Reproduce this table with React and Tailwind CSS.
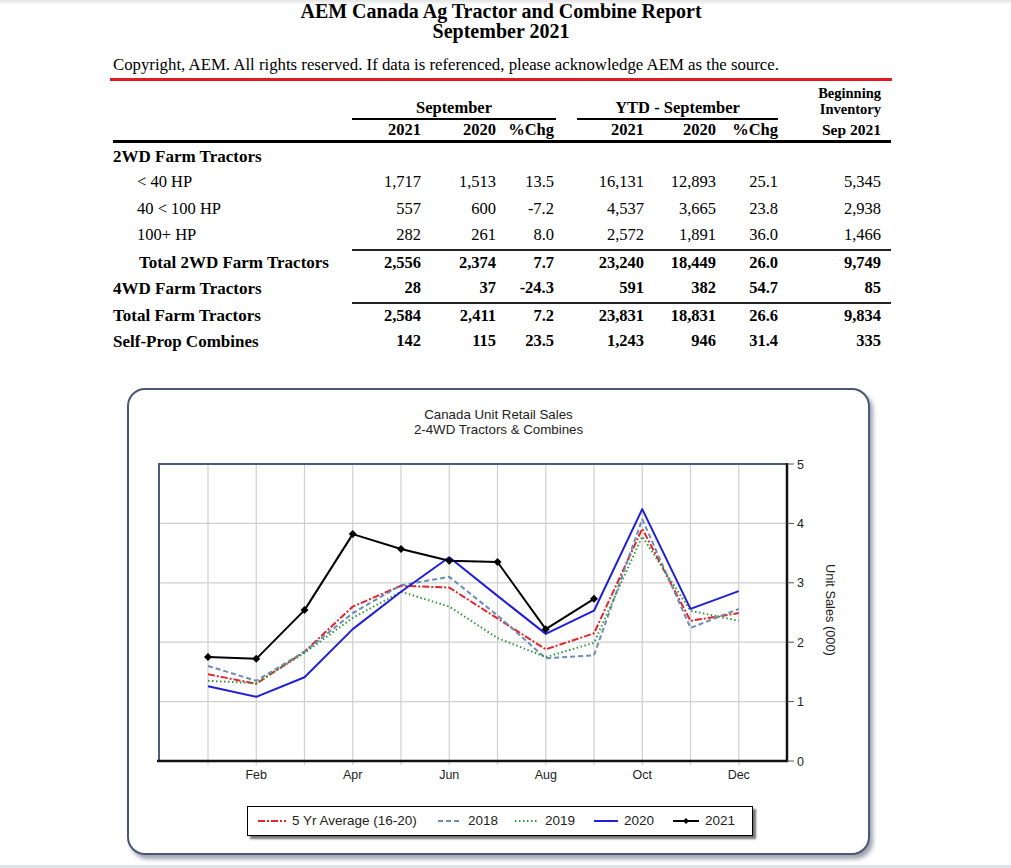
import React from 'react';

const COLS = 'grid grid-cols-[239px_69px_75px_58px_90px_72px_62px_103px_10px]';

const rows = [
  { label: '2WD Farm Tractors', bold: true, indent: 0, vals: null },
  { label: '< 40 HP', indent: 24, vals: ['1,717', '1,513', '13.5', '16,131', '12,893', '25.1', '5,345'] },
  { label: '40 < 100 HP', indent: 24, vals: ['557', '600', '-7.2', '4,537', '3,665', '23.8', '2,938'] },
  { label: '100+ HP', indent: 24, vals: ['282', '261', '8.0', '2,572', '1,891', '36.0', '1,466'] },
  { label: 'Total 2WD Farm Tractors', bold: true, indent: 26, line: true, vals: ['2,556', '2,374', '7.7', '23,240', '18,449', '26.0', '9,749'] },
  { label: '4WD Farm Tractors', bold: true, indent: 0, vals: ['28', '37', '-24.3', '591', '382', '54.7', '85'] },
  { label: 'Total Farm Tractors', bold: true, indent: 0, line: true, vals: ['2,584', '2,411', '7.2', '23,831', '18,831', '26.6', '9,834'] },
  { label: 'Self-Prop Combines', bold: true, indent: 0, vals: ['142', '115', '23.5', '1,243', '946', '31.4', '335'] },
];

// chart data, thousands of units, Jan..Dec
const series = [
  { name: '5 Yr Average (16-20)', color: '#e3242b', dash: '7 2 2 2', w: 30, data: [1.46, 1.3, 1.84, 2.6, 2.95, 2.92, 2.4, 1.88, 2.15, 3.91, 2.36, 2.49] },
  { name: '2018', color: '#6b8db3', dash: '5 3', w: 26, data: [1.6, 1.35, 1.84, 2.49, 2.96, 3.1, 2.45, 1.73, 1.78, 4.07, 2.24, 2.56] },
  { name: '2019', color: '#2f9a3c', dash: '1.5 2.5', w: 26, data: [1.35, 1.31, 1.82, 2.41, 2.85, 2.6, 2.07, 1.75, 1.99, 3.78, 2.53, 2.36] },
  { name: '2020', color: '#1f1fd8', dash: null, w: 26, data: [1.26, 1.08, 1.41, 2.22, 2.85, 3.43, 2.78, 2.14, 2.53, 4.24, 2.56, 2.86] },
  { name: '2021', color: '#000000', dash: null, w: 28, marker: true, data: [1.75, 1.72, 2.54, 3.82, 3.57, 3.37, 3.35, 2.22, 2.73] },
];

const mx = (i) => 208 + 48.25 * i;
const my = (v) => 761 - 59.4 * v;
const months = ['Jan', 'Feb', 'Mar', 'Apr', 'May', 'Jun', 'Jul', 'Aug', 'Sep', 'Oct', 'Nov', 'Dec'];
const SANS = "'Liberation Sans', Arial, sans-serif";

const Diamond = ({ x, y }) => (
  <polygon points={`${x},${y - 4} ${x + 4},${y} ${x},${y + 4} ${x - 4},${y}`} fill="#000" />
);

const Plot = () => (
  <svg width="739" height="335" viewBox="129 455 739 335" className="block">
    {/* grid */}
    {months.map((m, i) => (
      <line key={m} x1={mx(i)} y1={464} x2={mx(i)} y2={765} stroke="#cfcfcf" strokeWidth="1.2" />
    ))}
    {[1, 2, 3, 4].map((v) => (
      <line key={v} x1={159} y1={my(v)} x2={787} y2={my(v)} stroke="#cfcfcf" strokeWidth="1.2" />
    ))}
    {/* frame */}
    <line x1={159} y1={464} x2={787} y2={464} stroke="#4d5c7c" strokeWidth="2" />
    <line x1={159} y1={463} x2={159} y2={761} stroke="#4d5c7c" strokeWidth="2" />
    <line x1={157} y1={761} x2={788} y2={761} stroke="#111" strokeWidth="2.5" />
    <line x1={787} y1={463} x2={787} y2={762} stroke="#111" strokeWidth="2.5" />
    {[0, 1, 2, 3, 4, 5].map((v) => (
      <g key={v}>
        <line x1={787} y1={my(v)} x2={794} y2={my(v)} stroke="#555" strokeWidth="1" />
        <text x={797} y={my(v) + 4.5} fontSize="12.5" fill="#222" fontFamily={SANS}>{v}</text>
      </g>
    ))}
    {months.map((m, i) =>
      i % 2 === 1 ? (
        <text key={m} x={mx(i)} y={779} fontSize="12.5" textAnchor="middle" fill="#222" fontFamily={SANS}>{m}</text>
      ) : null
    )}
    <text x={826} y={610} fontSize="12.8" textAnchor="middle" fill="#222" transform="rotate(90 826 610)" fontFamily={SANS}>Unit Sales (000)</text>
    {/* lines */}
    {series.map((s) => (
      <g key={s.name}>
        <polyline
          points={s.data.map((v, i) => `${mx(i)},${my(v)}`).join(' ')}
          fill="none"
          stroke={s.color}
          strokeWidth="2"
          strokeDasharray={s.dash || undefined}
          strokeLinejoin="round"
        />
        {s.marker && s.data.map((v, i) => <Diamond key={i} x={mx(i)} y={my(v)} />)}
      </g>
    ))}
  </svg>
);

const Sample = ({ s }) => (
  <svg width={s.w} height="8" className="shrink-0">
    <line x1="1" y1="4" x2={s.w - 1} y2="4" stroke={s.color} strokeWidth="2" strokeDasharray={s.dash || undefined} />
    {s.marker && <polygon points={`${s.w / 2},1 ${s.w / 2 + 3},4 ${s.w / 2},7 ${s.w / 2 - 3},4`} fill="#000" />}
  </svg>
);

const Legend = () => {
  const widths = ['w-[180px]', 'w-[77px]', 'w-[79px]', 'w-[79px]', 'w-[72px]'];
  return (
    <div className="ml-[118px] w-[506px] h-[30px] border border-black bg-white shadow-[3px_3px_2px_rgba(0,0,0,0.55)] flex items-center pl-[9px] font-['Liberation_Sans',Arial,sans-serif] text-[13.5px] text-[#222]">
      {series.map((s, i) => (
        <div key={s.name} className={`${widths[i]} flex items-center gap-[5px]`}>
          <Sample s={s} />
          <span>{s.name}</span>
        </div>
      ))}
    </div>
  );
};

export default function App() {
  return (
    <div className="relative w-[1011px] h-[868px] overflow-hidden bg-white font-['Liberation_Serif','Times_New_Roman',serif] text-black">
      <div className="w-[1002px] pt-[1px] text-center font-bold text-[20px]">
        <div className="leading-[20px]">AEM Canada Ag Tractor and Combine Report</div>
        <div className="leading-[21px]">September 2021</div>
      </div>
      <div className="absolute top-0 left-0 w-full h-[5px] bg-linear-to-b from-[#e4e4e4] to-white/0 pointer-events-none" />

      <div className="ml-[113px] mt-[13px] text-[16.8px] leading-[20px]">
        Copyright, AEM. All rights reserved. If data is referenced, please acknowledge AEM as the source.
      </div>
      <div className="ml-[110px] mt-[3px] w-[782px] h-[3px] bg-[#e21b23]" />

      {/* table */}
      <div className="ml-[113px] mt-[4px] w-[778px]">
        <div className={`${COLS} h-[35px] items-end font-bold`}>
          <div />
          <div className="col-span-3 text-center text-[16.5px] border-b-2 border-black leading-[16px] pb-[2px] mr-[-2px]">September</div>
          <div className="col-span-3 text-center text-[16.5px] border-b-2 border-black leading-[16px] pb-[2px] ml-[23px]">YTD - September</div>
          <div className="self-start text-right text-[14.5px] leading-[16px]">
            <div>Beginning</div>
            <div>Inventory</div>
          </div>
          <div />
        </div>
        <div className={`${COLS} h-[23px] items-center font-bold text-[16.5px] border-b-[3px] border-black leading-[20px]`}>
          <div />
          <div className="text-right">2021</div>
          <div className="text-right">2020</div>
          <div className="text-right">%Chg</div>
          <div className="text-right">2021</div>
          <div className="text-right">2020</div>
          <div className="text-right">%Chg</div>
          <div className="text-right text-[15.5px]">Sep 2021</div>
          <div />
        </div>

        {rows.map((r) => (
          <div key={r.label} className={`${COLS} h-[26.5px] text-[16.5px] ${r.bold ? 'font-bold' : ''}`}>
            <div className={`flex items-center ${r.bold ? 'text-[17px]' : ''}`} style={{ paddingLeft: r.indent }}>{r.label}</div>
            {(r.vals || ['', '', '', '', '', '', '']).map((v, i) => (
              <div key={i} className={`flex items-center justify-end ${r.line ? 'border-t-2 border-[#222]' : ''}`}>
                {v}
              </div>
            ))}
            <div className={r.line ? 'border-t-2 border-[#222]' : ''} />
          </div>
        ))}
      </div>

      {/* chart */}
      <div className="ml-[127px] mt-[33px] w-[743px] h-[467px] border-2 border-[#4a5775] rounded-[18px] bg-white shadow-[3px_4px_4px_rgba(40,50,80,0.45)]">
        <div className="pt-[17px] text-center font-['Liberation_Sans',Arial,sans-serif] text-[13.3px] leading-[15px] text-[#222]">
          <div>Canada Unit Retail Sales</div>
          <div>2-4WD Tractors &amp; Combines</div>
        </div>
        <div className="mt-[18px]">
          <Plot />
        </div>
        <div className="mt-[16px]">
          <Legend />
        </div>
      </div>

      <div className="absolute bottom-0 left-0 w-full h-[3px] bg-[#dde1e6]" />
    </div>
  );
}
